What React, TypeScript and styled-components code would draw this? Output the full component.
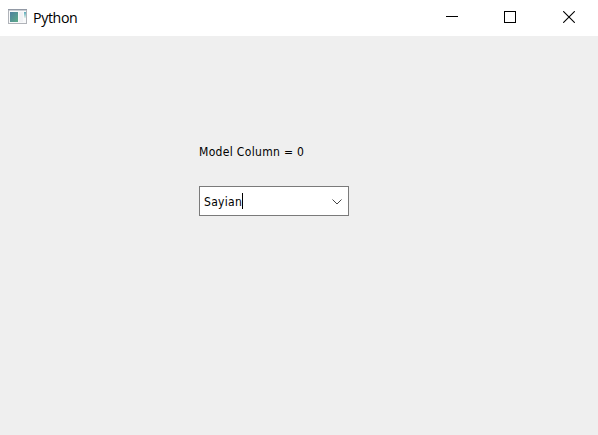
import React from "react";
import styled, { createGlobalStyle } from "styled-components";

const GlobalStyle = createGlobalStyle`
  body {
    margin: 0;
    background: #efefef;
  }
`;

const Window = styled.div`
  display: flex;
  flex-direction: column;
  width: 598px;
  height: 435px;
  overflow: hidden;
  background: #efefef;
  color: #000;
`;

const TitleBar = styled.header`
  display: flex;
  flex: none;
  height: 36px;
  background: #fff;
`;

const AppIcon = styled.svg`
  flex: none;
  width: 19px;
  height: 15px;
  margin: 9px 6px 0 8px;
`;

const Title = styled.span`
  flex: 1;
  font: 14.2px/36px "Open Sans", "Noto Sans", sans-serif;
  letter-spacing: -0.38px;
`;

const Controls = styled.div`
  display: flex;
  margin-right: -1px;
`;

const ControlButton = styled.button<{ $width: number }>`
  width: ${({ $width }) => $width}px;
  height: 36px;
  padding: 11px 0 0 20px;
  border: 0;
  background: transparent;
  display: flex;
  align-items: flex-start;
  color: #000;
`;

const Glyph = styled.svg`
  display: block;
  flex: none;
  fill: none;
  stroke: currentColor;
`;

const Content = styled.main`
  display: flex;
  flex-direction: column;
  align-items: flex-start;
  padding: 106px 0 0 199px;
`;

const Label = styled.label`
  height: 20px;
  margin-bottom: 24px;
  white-space: pre;
  font: 12px/20px "DejaVu Sans Condensed", "DejaVu Sans", sans-serif;
  font-stretch: condensed;
  letter-spacing: 0.33px;
`;

const ComboBox = styled.div`
  box-sizing: border-box;
  display: flex;
  width: 150px;
  height: 30px;
  border: 1px solid #7a7a7a;
  background: #fff;
`;

const ComboText = styled.span`
  margin-left: 4px;
  width: 38px;
  white-space: pre;
  font: 12px/30px "DejaVu Sans Condensed", "DejaVu Sans", sans-serif;
  font-stretch: condensed;
  letter-spacing: 0.3px;
`;

const Caret = styled.span`
  width: 1px;
  height: 16px;
  margin-top: 6px;
  background: #000;
`;

const Chevron = styled(Glyph)`
  margin: 12px 6px 0 auto;
`;

export default function App() {
  return (
    <>
      <GlobalStyle />
      <Window>
        <TitleBar>
          <AppIcon viewBox="0 0 19 15">
            <defs>
              <linearGradient id="pane" x1="0" y1="0" x2="1" y2="1">
                <stop offset="0" stopColor="#4d7fa0" />
                <stop offset="1" stopColor="#5dab88" />
              </linearGradient>
              <linearGradient id="strip" x1="0" y1="0" x2="0" y2="1">
                <stop offset="0" stopColor="#58a9b8" />
                <stop offset="1" stopColor="#e3f2ec" />
              </linearGradient>
            </defs>
            <rect x="0.5" y="0.5" width="18" height="14" fill="#f8f9fa" stroke="#b0b3b9" />
            <path d="M0 0.5H19" stroke="#9299a5" />
            <path d="M1 1.5H18" stroke="#c9cdd4" />
            <rect x="2" y="3" width="8" height="10" fill="url(#pane)" />
            <rect x="11" y="3" width="4" height="10" fill="#f0f1f4" />
            <rect x="16" y="3" width="2" height="6" fill="url(#strip)" />
          </AppIcon>
          <Title>Python</Title>
          <Controls>
            <ControlButton $width={58} aria-label="Minimize">
              <Glyph width="12" height="12">
                <path d="M0 5.5H12" />
              </Glyph>
            </ControlButton>
            <ControlButton $width={59} aria-label="Maximize">
              <Glyph width="12" height="12">
                <rect x="0.5" y="0.5" width="11" height="11" />
              </Glyph>
            </ControlButton>
            <ControlButton $width={56} aria-label="Close">
              <Glyph width="12" height="12">
                <path d="M0.2 0.2L11.8 11.8M11.8 0.2L0.2 11.8" strokeWidth="1.1" />
              </Glyph>
            </ControlButton>
          </Controls>
        </TitleBar>
        <Content>
          <Label>Model Column = 0</Label>
          <ComboBox>
            <ComboText>Sayian</ComboText>
            <Caret />
            <Chevron as="svg" width="10" height="6">
              <path d="M0.5 0.5L5 5L9.5 0.5" stroke="#444" strokeWidth="1" />
            </Chevron>
          </ComboBox>
        </Content>
      </Window>
    </>
  );
}
